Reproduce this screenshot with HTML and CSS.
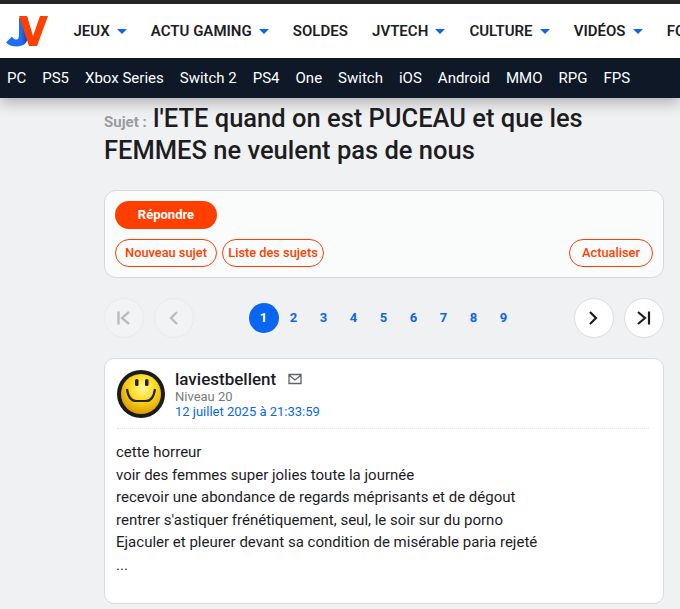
FILE: index.html
```html
<!DOCTYPE html>
<html lang="fr">
<head>
  <meta charset="UTF-8">
  <title>l'ETE quand on est PUCEAU</title>
  <link rel="stylesheet" href="styles.css">
</head>
<body>
<header class="site_header">
  <div class="main_nav">
    <svg class="logo" viewBox="0 0 42 31" width="42" height="31">
      <defs>
        <linearGradient id="jgrad" x1="0" y1="0" x2="1" y2="0">
          <stop offset="0" stop-color="#1a6ff5"/>
          <stop offset="0.7" stop-color="#1f6ef0"/>
          <stop offset="1" stop-color="#0d3fa8"/>
        </linearGradient>
      </defs>
      <path d="M13 2h9v18c0 7-5 10.500-11 10.500-4 0-8-1-11-4l6-6c1 2 2 3 4 3 2.500 0 3-2 3-5z" fill="url(#jgrad)"/>
      <path d="M13 0h8l6 20L34 0h8L31 30h-8z" fill="#ff3f00"/>
    </svg>
    <nav class="nav_items">
      <a href="#">JEUX<span class="caret"></span></a>
      <a href="#">ACTU GAMING<span class="caret"></span></a>
      <a href="#">SOLDES</a>
      <a href="#">JVTECH<span class="caret"></span></a>
      <a href="#">CULTURE<span class="caret"></span></a>
      <a href="#">VIDÉOS<span class="caret"></span></a>
      <a href="#">FORUMS</a>
    </nav>
  </div>
  <nav class="sub_nav">
    <a href="#">PC</a>
    <a href="#">PS5</a>
    <a href="#">Xbox Series</a>
    <a href="#">Switch 2</a>
    <a href="#">PS4</a>
    <a href="#">One</a>
    <a href="#">Switch</a>
    <a href="#">iOS</a>
    <a href="#">Android</a>
    <a href="#">MMO</a>
    <a href="#">RPG</a>
    <a href="#">FPS</a>
  </nav>
</header>

<main class="content">
  <h1 class="topic_title"><span class="topic_label">Sujet :</span> l'ETE quand on est PUCEAU et que les FEMMES ne veulent pas de nous</h1>

  <div class="actions_card">
    <a href="#" class="btn_primary">Répondre</a>
    <div class="actions_row">
      <a href="#" class="btn_outline">Nouveau sujet</a>
      <a href="#" class="btn_outline">Liste des sujets</a>
      <a href="#" class="btn_outline btn_refresh">Actualiser</a>
    </div>
  </div>

  <div class="pagination">
    <div class="page_arrows">
      <span class="round_btn disabled">
        <svg viewBox="0 0 18 18" width="18" height="18"><path d="M3.500 2.500v13M14 3 7 9l7 6" fill="none" stroke="#bcbcbc" stroke-width="2.400"/></svg>
      </span>
      <span class="round_btn disabled">
        <svg viewBox="0 0 18 18" width="18" height="18"><path d="M12 3 6 9l6 6" fill="none" stroke="#bcbcbc" stroke-width="2.400"/></svg>
      </span>
    </div>
    <div class="page_numbers">
      <a href="#" class="current">1</a>
      <a href="#">2</a>
      <a href="#">3</a>
      <a href="#">4</a>
      <a href="#">5</a>
      <a href="#">6</a>
      <a href="#">7</a>
      <a href="#">8</a>
      <a href="#">9</a>
    </div>
    <div class="page_arrows">
      <span class="round_btn">
        <svg viewBox="0 0 18 18" width="18" height="18"><path d="M5 3l6 6-6 6" fill="none" stroke="#1d1d1f" stroke-width="2.200"/></svg>
      </span>
      <span class="round_btn">
        <svg viewBox="0 0 18 18" width="18" height="18"><path d="M3 3l7 6-7 6M14 2.500v13" fill="none" stroke="#1d1d1f" stroke-width="2.200"/></svg>
      </span>
    </div>
  </div>

  <article class="post">
    <div class="post_head">
      <svg class="avatar" viewBox="0 0 48 48" width="48" height="48">
        <defs>
          <radialGradient id="smile" cx="0.55" cy="0.35" r="0.7">
            <stop offset="0" stop-color="#fff8a0"/>
            <stop offset="0.45" stop-color="#fbdc1e"/>
            <stop offset="1" stop-color="#d99000"/>
          </radialGradient>
        </defs>
        <circle cx="24" cy="24" r="24" fill="#1b1b1b"/>
        <circle cx="24" cy="24" r="20" fill="url(#smile)"/>
        <rect x="18" y="9" width="3.500" height="7" rx="1.500" fill="#2a2200"/>
        <rect x="28" y="9" width="3.500" height="7" rx="1.500" fill="#2a2200"/>
        <path d="M10 19c1 7 4 12 9 12h10c5 0 8-5 9-12" fill="none" stroke="#2a2200" stroke-width="2.200"/>
      </svg>
      <div class="post_meta">
        <div class="author_line">
          <span class="author">laviestbellent</span>
          <svg class="mail_icon" viewBox="0 0 14 12" width="14" height="12"><path d="M1 1.500h12v9H1zM1 2l6 5 6-5" fill="none" stroke="#5c6470" stroke-width="1.300"/></svg>
        </div>
        <div class="level">Niveau 20</div>
        <a href="#" class="post_date">12 juillet 2025 à 21:33:59</a>
      </div>
    </div>
    <div class="post_body">
      <p>cette horreur</p>
      <p>voir des femmes super jolies toute la journée</p>
      <p>recevoir une abondance de regards méprisants et de dégout</p>
      <p>rentrer s'astiquer frénétiquement, seul, le soir sur du porno</p>
      <p>Ejaculer et pleurer devant sa condition de misérable paria rejeté</p>
      <p>...</p>
    </div>
  </article>
</main>
</body>
</html>
```

FILE: styles.css
```css
* {
  box-sizing: border-box;
}

html, body {
  height: 100%;
  overflow: hidden;
}

body {
  margin: 0;
  background: #f0f1f3;
  font-family: Roboto, "Liberation Sans", sans-serif;
  color: #1d1d1f;
  border-top: 4px solid #26262b;
}

a {
  text-decoration: none;
}

.site_header {
  box-shadow: 0 4px 14px rgba(0, 0, 0, 0.3);
}

.main_nav {
  display: flex;
  align-items: center;
  height: 54px;
  background: #fff;
  padding-left: 6px;
  overflow: hidden;
}

.logo {
  flex: none;
  margin-right: 25.500px;
}

.nav_items {
  display: flex;
  gap: 24.200px;
  white-space: nowrap;
}

.nav_items a {
  display: flex;
  align-items: center;
  color: #1d1d1f;
  font-size: 15px;
  font-weight: 600;
}

.caret {
  width: 0;
  height: 0;
  margin-left: 7px;
  border-left: 5.500px solid transparent;
  border-right: 5.500px solid transparent;
  border-top: 5px solid #0a66f0;
}

.sub_nav {
  display: flex;
  align-items: center;
  gap: 16px;
  height: 40px;
  background: #0e1827;
  padding-left: 7px;
  white-space: nowrap;
}

.sub_nav a {
  color: #fff;
  font-size: 15px;
}

.content {
  padding: 4px 16px 0 104px;
}

.topic_title {
  margin: 0 0 24px;
  font-size: 25.500px;
  line-height: 32px;
  font-weight: 500;
  color: #1d1d1f;
}

.topic_label {
  font-size: 15px;
  line-height: 1;
  font-weight: 700;
  color: #9a9a9f;
}

.actions_card {
  padding: 10px;
  background: #fafbfb;
  border: 1px solid #d6d8db;
  border-radius: 12px;
}

.btn_primary {
  display: block;
  width: 102px;
  height: 28px;
  line-height: 28px;
  text-align: center;
  background: #ff3f00;
  color: #fff;
  font-size: 13px;
  font-weight: 700;
  border-radius: 14px;
}

.actions_row {
  display: flex;
  gap: 5px;
  margin-top: 10px;
}

.btn_outline {
  display: block;
  width: 102px;
  height: 28px;
  line-height: 26px;
  text-align: center;
  border: 1px solid #ff3f00;
  color: #ff3f00;
  font-size: 12.800px;
  font-weight: 500;
  border-radius: 14px;
  white-space: nowrap;
}

.btn_refresh {
  width: 84px;
  margin-left: auto;
}

.pagination {
  display: flex;
  align-items: center;
  justify-content: space-between;
  margin: 20px 0;
}

.page_arrows {
  display: flex;
  gap: 10px;
}

.round_btn {
  display: flex;
  align-items: center;
  justify-content: center;
  width: 40px;
  height: 40px;
  background: #fff;
  border: 1px solid #dcdde0;
  border-radius: 50%;
}

.round_btn.disabled {
  background: #f2f3f4;
  border-color: #e8e9eb;
}

.page_numbers {
  display: flex;
  margin-right: 1px;
}

.page_numbers a {
  width: 30px;
  height: 30px;
  line-height: 30px;
  text-align: center;
  color: #0a66f0;
  font-size: 13px;
  font-weight: 700;
  border-radius: 50%;
}

.page_numbers a.current {
  background: #0a66f0;
  color: #fff;
}

.post {
  height: 246px;
  padding: 11px 14px 0 12px;
  background: #fff;
  border: 1px solid #d9dadd;
  border-radius: 10px;
}

.post_head {
  display: flex;
  gap: 10px;
  padding-bottom: 9px;
  border-bottom: 1px dotted #e2e3e5;
}

.post_meta {
  line-height: 14px;
}

.author_line {
  display: flex;
  align-items: center;
  gap: 12px;
  height: 18px;
  margin-bottom: 2px;
}

.author {
  font-size: 17px;
  font-weight: 500;
}

.level {
  font-size: 13px;
  color: #777a80;
}

.post_date {
  font-size: 13px;
  color: #0a66f0;
}

.post_body {
  margin-top: 12px;
  margin-left: -1px;
  font-size: 15px;
  line-height: 22.600px;
}

.post_body p {
  margin: 0;
}
```
